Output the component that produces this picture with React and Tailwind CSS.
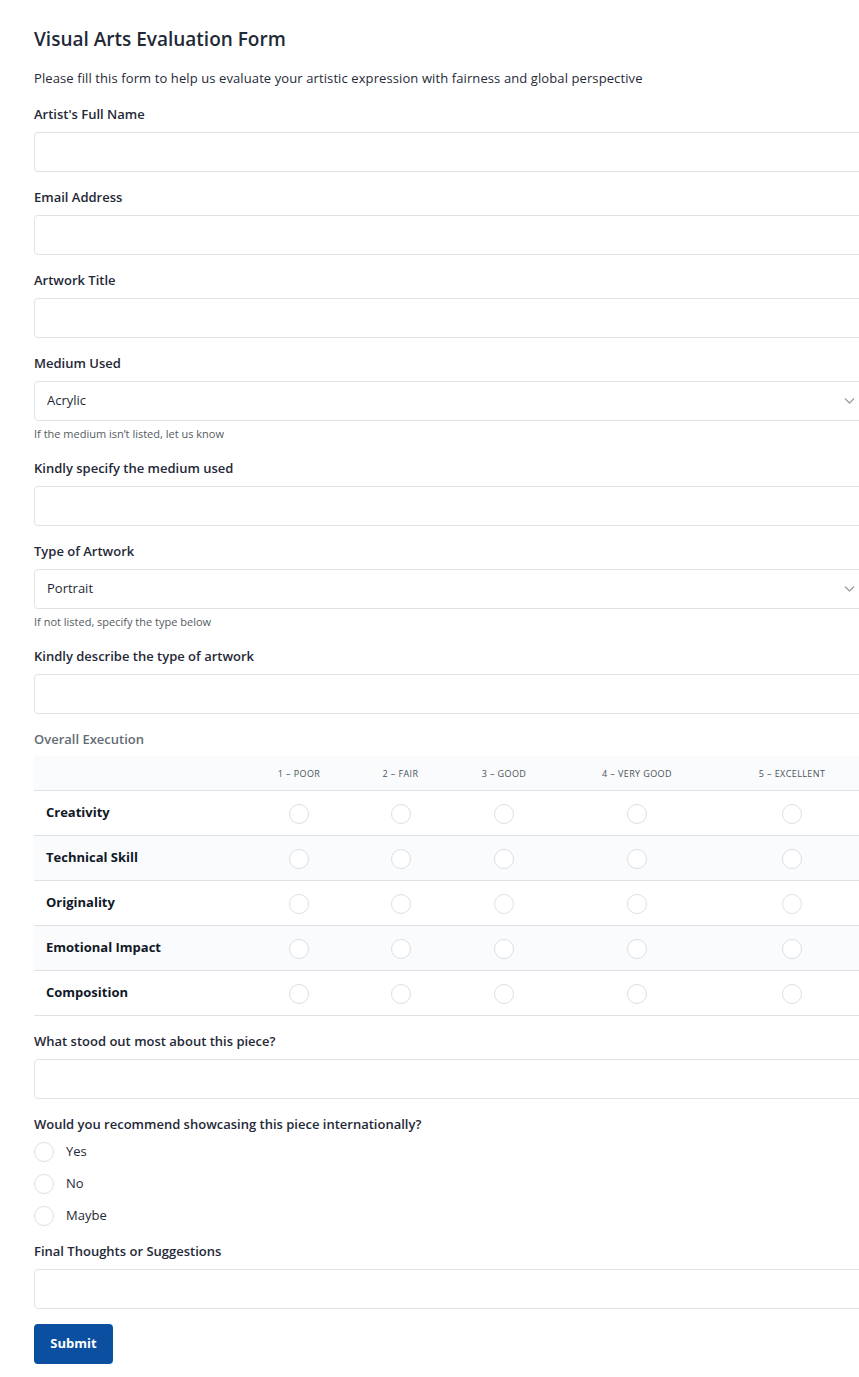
import React, { useState } from "react";

const inputCls =
  "block w-full h-10 px-3 rounded border border-[#dfe2e6] bg-white text-[13px] text-[#1f2937] outline-none";

const criteria = [
  "Creativity",
  "Technical Skill",
  "Originality",
  "Emotional Impact",
  "Composition",
];

const scale = [
  ["1 – POOR", "w-[100px]"],
  ["2 – FAIR", "w-[103px]"],
  ["3 – GOOD", "w-[104px]"],
  ["4 – VERY GOOD", "w-[162px]"],
  ["5 – EXCELLENT", "w-[148px]"],
];

const Field = ({ label, children, className = "" }) => (
  <div className={className}>
    <label className="block text-[13px] font-semibold text-[#1f2937] leading-[18px] mb-[9px]">
      {label}
    </label>
    {children}
  </div>
);

const Chevron = () => (
  <svg
    className="absolute right-[11px] top-1/2 -translate-y-1/2"
    width="11"
    height="7"
    viewBox="0 0 11 7"
    fill="none"
  >
    <path d="M1 1l4.5 4.5L10 1" stroke="#9aa1a9" strokeWidth="1.3" />
  </svg>
);

const Circle = () => (
  <span className="inline-block w-[20px] h-[20px] rounded-full border border-[#dcdfe3] bg-white" />
);

export default function App() {
  const [form, setForm] = useState({
    NAME: "",
    EMAIL: "",
    TITLE: "",
    MEDIUM: "Acrylic",
    MEDIUM_OTHER: "",
    TYPE: "Portrait",
    TYPE_OTHER: "",
    STOOD_OUT: "",
    FINAL: "",
  });

  const handleChange = (e) => {
    const { name, value } = e.target;
    setForm({ ...form, [name]: value });
  };

  return (
    <div
      className="min-h-screen bg-white overflow-hidden"
      style={{ fontFamily: '"Open Sans", "Noto Sans", sans-serif' }}
    >
      <form className="pl-[34px] pt-[26px] pb-[13px] w-[900px]">
        <h2 className="text-[19px] font-semibold text-[#1f2937] leading-[26px]">
          Visual Arts Evaluation Form
        </h2>
        <p className="text-[13px] text-[#1f2937] mt-[17px] leading-[18px] tracking-[0.1px]">
          Please fill this form to help us evaluate your artistic expression with fairness and global perspective
        </p>

        <div className="w-[832px]">
          <Field label="Artist's Full Name" className="mt-[18px]">
            <input name="NAME" value={form.NAME} onChange={handleChange} className={inputCls} />
          </Field>
          <Field label="Email Address" className="mt-[16px]">
            <input name="EMAIL" value={form.EMAIL} onChange={handleChange} className={inputCls} />
          </Field>
          <Field label="Artwork Title" className="mt-[16px]">
            <input name="TITLE" value={form.TITLE} onChange={handleChange} className={inputCls} />
          </Field>
          <Field label="Medium Used" className="mt-[16px]">
            <div className="relative">
              <select
                name="MEDIUM"
                value={form.MEDIUM}
                onChange={handleChange}
                className={inputCls + " appearance-none"}
              >
                <option>Acrylic</option>
                <option>Oil</option>
                <option>Watercolor</option>
                <option>Other</option>
              </select>
              <Chevron />
            </div>
            <p className="text-[11px] text-[#555b62] mt-[5px] leading-[16px]">
              If the medium isn’t listed, let us know
            </p>
          </Field>
          <Field label="Kindly specify the medium used" className="mt-[17px]">
            <input name="MEDIUM_OTHER" value={form.MEDIUM_OTHER} onChange={handleChange} className={inputCls} />
          </Field>
          <Field label="Type of Artwork" className="mt-[16px]">
            <div className="relative">
              <select
                name="TYPE"
                value={form.TYPE}
                onChange={handleChange}
                className={inputCls + " appearance-none"}
              >
                <option>Portrait</option>
                <option>Landscape</option>
                <option>Abstract</option>
                <option>Other</option>
              </select>
              <Chevron />
            </div>
            <p className="text-[11px] text-[#555b62] mt-[5px] leading-[16px]">
              If not listed, specify the type below
            </p>
          </Field>
          <Field label="Kindly describe the type of artwork" className="mt-[17px]">
            <input name="TYPE_OTHER" value={form.TYPE_OTHER} onChange={handleChange} className={inputCls} />
          </Field>

          <div className="mt-[16px]">
            <div className="text-[13px] font-semibold text-[#646b73] leading-[18px]">
              Overall Execution
            </div>
            <table className="mt-[8px] w-full border-collapse">
              <thead>
                <tr className="bg-[#f9fbfc] h-[34px] border-b border-[#dfe2e6]">
                  <th className="w-[215px]"></th>
                  {scale.map(([s, w]) => (
                    <th
                      key={s}
                      className={`${w} pt-[2px] text-[9px] font-normal text-[#4b5259] tracking-[0.4px] text-center`}
                    >
                      {s}
                    </th>
                  ))}
                </tr>
              </thead>
              <tbody>
                {criteria.map((c, i) => (
                  <tr
                    key={c}
                    className={`h-[45px] border-b border-[#dfe2e6] ${i % 2 === 1 ? "bg-[#f9fbfc]" : "bg-white"}`}
                  >
                    <td className="pl-[12px] text-[13px] font-bold text-[#111827]">{c}</td>
                    {scale.map(([s]) => (
                      <td key={s} className="text-center align-middle">
                        <span className="inline-flex align-middle">
                          <Circle />
                        </span>
                      </td>
                    ))}
                  </tr>
                ))}
              </tbody>
            </table>
          </div>

          <Field label="What stood out most about this piece?" className="mt-[16px]">
            <input name="STOOD_OUT" value={form.STOOD_OUT} onChange={handleChange} className={inputCls} />
          </Field>

          <div className="mt-[16px]">
            <div className="text-[13px] font-semibold text-[#1f2937] leading-[18px]">
              Would you recommend showcasing this piece internationally?
            </div>
            <div className="mt-[3px] flex flex-col">
              {["Yes", "No", "Maybe"].map((o) => (
                <label key={o} className="flex items-center h-[32px] gap-[12px]">
                  <Circle />
                  <span className="text-[13px] text-[#1f2937]">{o}</span>
                </label>
              ))}
            </div>
          </div>

          <Field label="Final Thoughts or Suggestions" className="mt-[10px]">
            <input name="FINAL" value={form.FINAL} onChange={handleChange} className={inputCls} />
          </Field>

          <button
            type="button"
            className="mt-[15px] h-10 w-[79px] rounded bg-[#0b50a0] text-white text-[13px] font-bold"
          >
            Submit
          </button>
        </div>
      </form>
    </div>
  );
}
